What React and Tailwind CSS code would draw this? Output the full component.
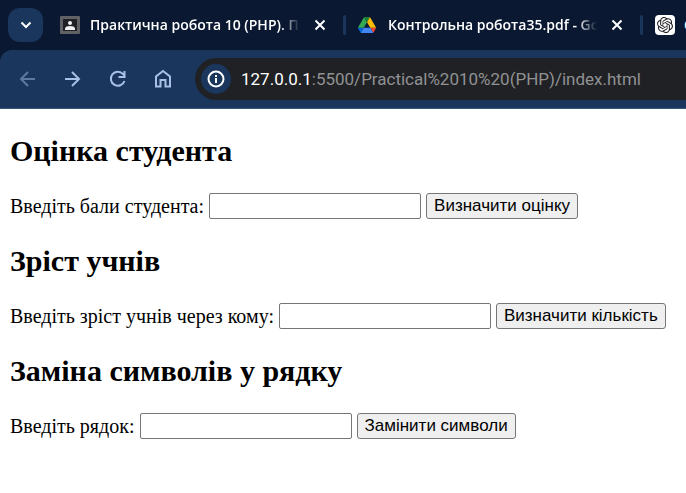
import { SiOpenai } from "react-icons/si";

const FORMS = [
  { id: "grade", title: "Оцінка студента", label: "Введіть бали студента:", action: "Визначити оцінку" },
  { id: "height", title: "Зріст учнів", label: "Введіть зріст учнів через кому:", action: "Визначити кількість" },
  { id: "text", title: "Заміна символів у рядку", label: "Введіть рядок:", action: "Замінити символи" },
];

function Stroke({ d, className, width = 2, children }) {
  return (
    <svg viewBox="0 0 20 20" className={className} fill="none" stroke="currentColor" strokeWidth={width} aria-hidden="true">
      {d && <path d={d} />}
      {children}
    </svg>
  );
}

function ClassroomIcon() {
  return (
    <svg viewBox="0 0 20 18" className="h-[18px] w-5 shrink-0" aria-hidden="true">
      <rect width="20" height="18" rx="1" fill="#5f6164" />
      <rect x="3" y="3" width="14" height="12" fill="#202124" />
      <circle cx="10" cy="7" r="2" fill="#f1f1f1" />
      <path d="M5 14v-1.500c0-1.700 2.500-2.500 5-2.500s5 .8 5 2.500V14z" fill="#f1f1f1" />
    </svg>
  );
}

function DriveIcon() {
  return (
    <svg viewBox="0 0 87.3 78" className="h-4 w-[18px] shrink-0" aria-hidden="true">
      <path d="m6.600 66.850 3.850 6.650c.8 1.400 1.950 2.500 3.300 3.300l13.750-23.800h-27.500c0 1.550.4 3.100 1.200 4.500z" fill="#0066da" />
      <path d="m43.650 25-13.750-23.800c-1.350.8-2.500 1.900-3.300 3.300l-25.400 44a9.060 9.060 0 0 0-1.200 4.500h27.500z" fill="#34a853" />
      <path d="m73.550 76.800c1.350-.8 2.500-1.900 3.300-3.300l1.600-2.750 7.650-13.250c.8-1.400 1.200-2.950 1.200-4.500h-27.502l5.852 11.500z" fill="#ea4335" />
      <path d="m43.650 25 13.750-23.800c-1.350-.8-2.900-1.200-4.500-1.200h-18.500c-1.600 0-3.150.45-4.500 1.200z" fill="#188038" />
      <path d="m59.800 53h-32.300l-13.750 23.800c1.350.8 2.900 1.200 4.500 1.200h50.800c1.600 0 3.150-.45 4.500-1.200z" fill="#4285f4" />
      <path d="m73.400 26.500-12.700-22c-.8-1.400-1.950-2.500-3.300-3.300l-13.750 23.800 16.150 28h27.450c0-1.550-.4-3.100-1.200-4.500z" fill="#fbbc04" />
    </svg>
  );
}

function Tab({ icon, title, width }) {
  return (
    <div className={`flex shrink-0 items-center ${width}`}>
      <span className="flex w-[30px] shrink-0 items-center">{icon}</span>
      <span className="min-w-0 flex-1 overflow-hidden whitespace-nowrap mask-r-from-[calc(100%-20px)] text-sm leading-6 font-semibold text-white">
        {title}
      </span>
      <button type="button" aria-label="Закрити вкладку" className="ml-2 flex size-6 shrink-0 items-center justify-center text-white">
        <Stroke className="size-5" d="M5.500 5.500l9 9M14.500 5.500l-9 9" />
      </button>
    </div>
  );
}

function Divider() {
  return <span className="h-5 w-[3px] shrink-0 rounded-full bg-[#1b365d]" />;
}

export default function App() {
  return (
    <div className="min-h-screen overflow-hidden bg-white">
      <header className="bg-[#0a1931]">
        <div className="flex h-[50px] items-center overflow-hidden pl-2 font-['Open_Sans',sans-serif]">
          <button type="button" aria-label="Пошук вкладок" className="mr-[17px] flex h-[34px] w-[35px] shrink-0 items-center justify-center rounded-xl bg-[#1b365d] text-white">
            <Stroke className="size-5" d="M5.500 7.500l4.500 4.500 4.500-4.500" />
          </button>
          <Tab icon={<ClassroomIcon />} title="Практична робота 10 (PHP). П" width="w-[272px]" />
          <span className="mr-3 ml-[11px] flex"><Divider /></span>
          <Tab icon={<DriveIcon />} title="Контрольна робота35.pdf - Go" width="w-[271px]" />
          <span className="mr-3 ml-[11px] flex"><Divider /></span>
          <span className="flex size-5 shrink-0 items-center justify-center rounded-sm bg-white text-[#202124]">
            <SiOpenai className="size-4" />
          </span>
          <span className="ml-[9px] shrink-0 text-sm font-semibold text-white">C</span>
        </div>
        <div className="flex h-[59px] items-center overflow-hidden rounded-tl-xl border-b border-[#3b5479] bg-[#1b365d] pl-[18px] text-[#a8c0e6]">
          <nav className="flex shrink-0 gap-[25px]">
            <button type="button" aria-label="Назад" className="text-[#5e789f]">
              <Stroke className="size-5" d="M17 10H4M10 3L3 10l7 7" />
            </button>
            <button type="button" aria-label="Вперед">
              <Stroke className="size-5" d="M2 10H16M9 3l7 7-7 7" />
            </button>
            <button type="button" aria-label="Оновити">
              <Stroke className="size-5" d="M16.500 12A7 7 0 1 1 15 5l2 2.500M16.500 2v6h-6" />
            </button>
            <button type="button" aria-label="Головна">
              <Stroke className="size-5" d="M3 17.500V7.500L10 2l7 5.500v10h-4.500v-6.500H7.500v6.500z" />
            </button>
          </nav>
          <div className="ml-[22px] flex h-[42px] min-w-0 flex-1 items-center rounded-l-full bg-[#202124] pl-1.5">
            <button type="button" aria-label="Відомості про сайт" className="flex size-[30px] shrink-0 items-center justify-center rounded-full bg-[#1b365d] text-white">
              <Stroke className="size-5">
                <circle cx="10" cy="10" r="7.500" />
                <path d="M10 9v5M10 6v2" />
              </Stroke>
            </button>
            <span className="ml-2.5 font-[Roboto,sans-serif] text-[17px] leading-7 whitespace-nowrap text-[#909193]">
              <span className="text-white">127.0.0.1</span>:5500/Practical%2010%20(PHP)/index.html
            </span>
          </div>
        </div>
      </header>
      <main className="px-2.5 pt-[25px] font-['Liberation_Serif',serif] text-black">
        {FORMS.map((f) => (
          <form key={f.id} className="mb-[25px]" onSubmit={(e) => e.preventDefault()}>
            <h2 className="mb-[25px] text-3xl leading-[34px] font-bold">{f.title}</h2>
            <div className="flex items-center gap-[5px] whitespace-nowrap">
              <label htmlFor={f.id} className="text-xl leading-[26px]">{f.label}</label>
              <input id={f.id} type="text" className="h-[26px] w-[212px] rounded-xs border border-[#767676] bg-white px-1 font-['Liberation_Sans',sans-serif] text-base" />
              <button type="submit" className="h-[26px] rounded-[3px] border border-[#767676] bg-[#efefef] px-[7px] font-['Liberation_Sans',sans-serif] text-[17px] leading-5">
                {f.action}
              </button>
            </div>
          </form>
        ))}
      </main>
    </div>
  );
}
